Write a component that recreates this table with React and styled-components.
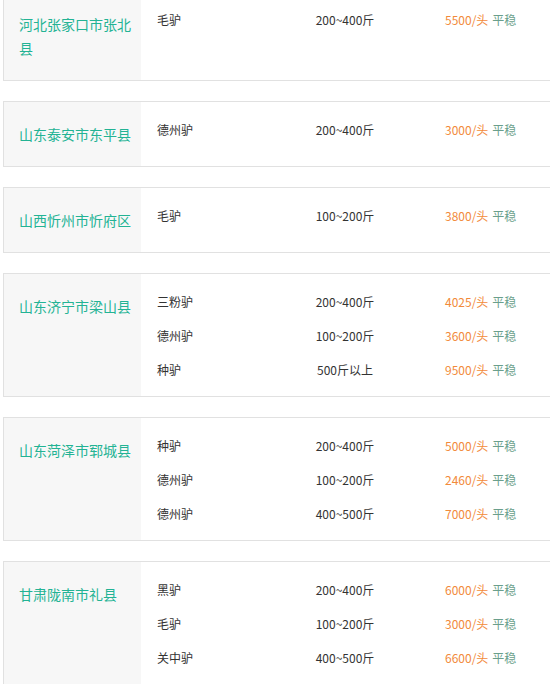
import React from "react";
import styled, { createGlobalStyle } from "styled-components";

const Global = createGlobalStyle`
  html, body { margin: 0; padding: 0; background: #fff; overflow: hidden; }
  body { font-family: "Noto Sans CJK SC", "Noto Sans", sans-serif; }
`;

const List = styled.div`
  display: flex;
  flex-direction: column;
  gap: 20px;
  box-sizing: border-box;
  padding-left: 3px;
  margin-top: -9px;
  width: 550px;
`;

const Card = styled.section`
  display: flex;
  border: 1px solid #e1e1e1;
  border-right: none;
`;

const Region = styled.h3`
  margin: 0;
  flex: 0 0 137px;
  box-sizing: border-box;
  background: #f7f7f7;
  padding: 20px 10px 20px 15px;
  font-size: 14px;
  line-height: 24px;
  font-weight: normal;
  color: #23b394;
`;

const Rows = styled.div`
  flex: 1;
  min-width: 0;
  padding: 10px 0;
`;

const Row = styled.div`
  display: grid;
  grid-template-columns: 136px 136px 1fr;
  height: 34px;
  align-items: center;
  font-size: 12px;
  color: #333;
`;

const Breed = styled.span`
  padding-left: 16px;
`;

const Weight = styled.span`
  text-align: center;
`;

const Price = styled.span`
  padding-left: 32px;
  color: #f28a3a;
  white-space: nowrap;
`;

const Trend = styled.span`
  color: #6a9f8c;
  margin-left: 4px;
`;

const data = [
  { region: "河北张家口市张北县", rows: [["毛驴", "200~400斤", "5500"]] },
  { region: "山东泰安市东平县", rows: [["德州驴", "200~400斤", "3000"]] },
  { region: "山西忻州市忻府区", rows: [["毛驴", "100~200斤", "3800"]] },
  {
    region: "山东济宁市梁山县",
    rows: [
      ["三粉驴", "200~400斤", "4025"],
      ["德州驴", "100~200斤", "3600"],
      ["种驴", "500斤以上", "9500"],
    ],
  },
  {
    region: "山东菏泽市郓城县",
    rows: [
      ["种驴", "200~400斤", "5000"],
      ["德州驴", "100~200斤", "2460"],
      ["德州驴", "400~500斤", "7000"],
    ],
  },
  {
    region: "甘肃陇南市礼县",
    rows: [
      ["黑驴", "200~400斤", "6000"],
      ["毛驴", "100~200斤", "3000"],
      ["关中驴", "400~500斤", "6600"],
    ],
  },
];

export default function App() {
  return (
    <>
      <Global />
      <List>
        {data.map((c) => (
          <Card key={c.region}>
            <Region>{c.region}</Region>
            <Rows>
              {c.rows.map((r, i) => (
                <Row key={i}>
                  <Breed>{r[0]}</Breed>
                  <Weight>{r[1]}</Weight>
                  <Price>
                    {r[2]}/头<Trend>平稳</Trend>
                  </Price>
                </Row>
              ))}
            </Rows>
          </Card>
        ))}
      </List>
    </>
  );
}
